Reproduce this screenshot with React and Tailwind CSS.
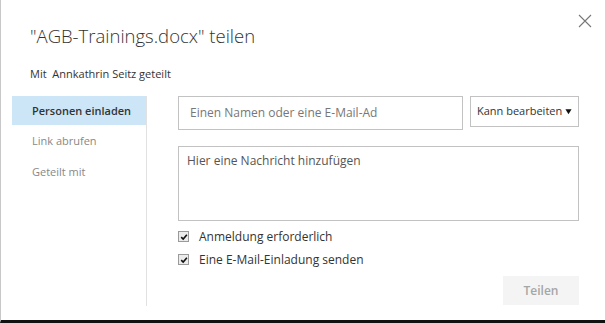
import { useState } from 'react';

function Check({ checked, onChange, label }) {
  return (
    <label className="flex items-center gap-[10px] h-[17px] cursor-pointer">
      <input type="checkbox" checked={checked} onChange={onChange} className="sr-only" />
      <span className="w-[11px] h-[11px] border border-[#9a9a9a] bg-[#ececec] flex items-center justify-center">
        {checked && (
          <svg viewBox="0 0 10 10" className="w-[8px] h-[8px]" fill="none" stroke="#111" strokeWidth="2">
            <path d="M1.5 5.2 L4 7.6 L8.6 2.2" />
          </svg>
        )}
      </span>
      {label}
    </label>
  );
}

export default function App() {
  const [signIn, setSignIn] = useState(true);
  const [sendMail, setSendMail] = useState(true);
  const [tab, setTab] = useState('invite');

  const tabs = [
    { id: 'invite', label: 'Personen einladen' },
    { id: 'link', label: 'Link abrufen' },
    { id: 'shared', label: 'Geteilt mit' },
  ];

  return (
    <div
      className="relative w-[605px] h-[323px] bg-white border-l border-[#c8c8c8] border-b-[3px] border-b-[#111] overflow-hidden text-[#333]"
      style={{ fontFamily: '"Open Sans", "Noto Sans", sans-serif' }}
    >
      <button className="absolute top-[13px] right-[12px] w-[16px] h-[16px] text-[#777]" aria-label="Schließen">
        <svg viewBox="0 0 16 16" className="w-full h-full" fill="none" stroke="currentColor" strokeWidth="1.1">
          <path d="M2 2 L14 14 M14 2 L2 14" />
        </svg>
      </button>

      <div className="pl-[29px] pt-[22px]">
        <h1 className="text-[18.5px] leading-[28px] font-light text-[#333]">"AGB-Trainings.docx" teilen</h1>
        <p className="mt-[16px] text-[11px] leading-[16px] text-[#333]">Mit&nbsp; Annkathrin Seitz geteilt</p>
      </div>

      <div className="flex mt-[14px]">
        <div className="w-[146px] h-[210px] pl-[11px] border-r border-[#e1e1e1]">
          {tabs.map((t) => (
            <button
              key={t.id}
              onClick={() => setTab(t.id)}
              className={`block w-full text-left pl-[20px] text-[11px] ${
                t.id === 'invite'
                  ? 'h-[29px] leading-[29px] font-semibold text-[#333]'
                  : 'h-[31px] leading-[31px] text-[#888]'
              } ${tab === t.id ? 'bg-[#cde6f7]' : ''}`}
            >
              {t.label}
            </button>
          ))}
        </div>

        <div className="pl-[31px] w-[434px]">
          <div className="flex gap-[7px]">
            <div className="w-[285px] h-[34px] border border-[#c2c2c2] flex items-center pl-[11px]">
              <div className="w-[193px] overflow-hidden whitespace-nowrap text-[12px] text-[#777]">
                Einen Namen oder eine E-Mail-Ad
              </div>
            </div>
            <div className="w-[109px] h-[31px] border border-[#c2c2c2] flex items-center justify-between pl-[6px] pr-[6px] text-[11px] text-[#333]">
              <span>Kann bearbeiten</span>
              <svg viewBox="0 0 8 8" className="w-[7px] h-[7px]" fill="#111">
                <path d="M0.5 1.5 H7.5 L4 7 Z" />
              </svg>
            </div>
          </div>

          <div className="mt-[16px] w-[401px] h-[75px] border border-[#c2c2c2] pl-[8px] pt-[5px] text-[12px] text-[#555]">
            Hier eine Nachricht hinzufügen
          </div>

          <div className="mt-[7px] flex flex-col gap-[6px] text-[12px] text-[#333]">
            <Check checked={signIn} onChange={(e) => setSignIn(e.target.checked)} label="Anmeldung erforderlich" />
            <Check checked={sendMail} onChange={(e) => setSendMail(e.target.checked)} label="Eine E-Mail-Einladung senden" />
          </div>

          <div className="flex justify-end w-[401px] mt-[8px]">
            <button disabled className="w-[76px] h-[29px] bg-[#f4f4f4] text-[12px] font-semibold text-[#a6a6a6]">
              Teilen
            </button>
          </div>
        </div>
      </div>
    </div>
  );
}
